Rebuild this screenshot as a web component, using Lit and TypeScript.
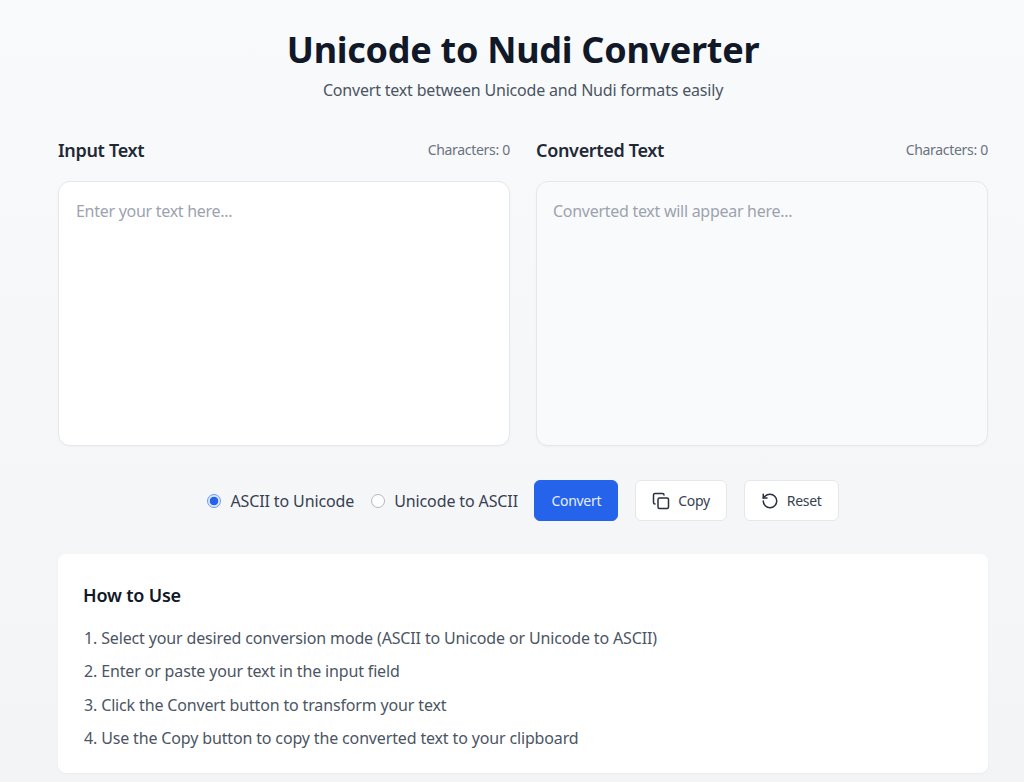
import { LitElement, html, css, svg } from "lit";
import { customElement } from "lit/decorators.js";

const steps = [
  "Select your desired conversion mode (ASCII to Unicode or Unicode to ASCII)",
  "Enter or paste your text in the input field",
  "Click the Convert button to transform your text",
  "Use the Copy button to copy the converted text to your clipboard",
];

@customElement("app-root")
export class AppRoot extends LitElement {
  static styles = css`
    :host {
      display: block;
      height: 782px;
      overflow: hidden;
      background: linear-gradient(to bottom, #f9fafb, #f3f4f6);
      font-family: "Noto Sans", "Liberation Sans", sans-serif;
      color: #111827;
    }
    .page {
      width: 930px;
      margin-left: 58px;
      padding-top: 28px;
      box-sizing: border-box;
    }
    header {
      text-align: center;
    }
    h1 {
      margin: 0;
      font-size: 36px;
      line-height: 44px;
      font-weight: 700;
      letter-spacing: -0.28px;
    }
    .sub {
      margin: 6px 0 0;
      font-size: 16px;
      line-height: 24px;
      color: #4b5563;
      letter-spacing: -0.19px;
    }
    .grid {
      display: grid;
      grid-template-columns: 452px 452px;
      column-gap: 26px;
      margin-top: 35px;
    }
    .head {
      display: flex;
      justify-content: space-between;
      align-items: center;
      height: 28px;
      margin-bottom: 16px;
    }
    h2 {
      margin: 0;
      font-size: 18px;
      line-height: 26px;
      height: 28px;
      font-weight: 600;
      color: #1f2937;
      letter-spacing: -0.32px;
    }
    .count {
      font-size: 14px;
      line-height: 20px;
      color: #6b7280;
      position: relative;
      top: -1px;
      letter-spacing: -0.3px;
    }
    textarea {
      display: block;
      width: 100%;
      height: 265px;
      box-sizing: border-box;
      padding: 17px;
      border: 1px solid #e5e7eb;
      border-radius: 12px;
      background: #fff;
      font: 16px/24px "Noto Sans", "Liberation Sans", sans-serif;
      letter-spacing: -0.28px;
      color: #111827;
      resize: none;
      outline: none;
      box-shadow: 0 1px 2px rgba(0, 0, 0, 0.03);
    }
    textarea.out {
      background: #f9fafb;
      padding-left: 16px;
    }
    textarea::placeholder {
      color: #9ca3af;
      opacity: 1;
    }
    .controls {
      display: flex;
      justify-content: center;
      align-items: center;
      gap: 16.5px;
      margin-top: 34px;
    }
    .radio {
      display: flex;
      align-items: center;
      gap: 9px;
      font-size: 16px;
      line-height: 24px;
      color: #374151;
      letter-spacing: -0.12px;
    }
    .radio input {
      appearance: none;
      box-sizing: border-box;
      width: 14px;
      height: 14px;
      margin: 0;
      border-radius: 50%;
      background: #fff;
      border: 1.5px solid #b4b7bd;
    }
    .radio input:checked {
      border-color: #6d9af3;
      background: radial-gradient(circle, #2563eb 0 4px, #dbe7fd 4.6px);
    }
    .radios {
      display: flex;
      gap: 17px;
    }
    button {
      display: inline-flex;
      align-items: center;
      justify-content: center;
      gap: 8px;
      height: 41px;
      box-sizing: border-box;
      border-radius: 6px;
      font: 400 14px/20px "Noto Sans", "Liberation Sans", sans-serif;
      letter-spacing: -0.3px;
      border: 1px solid #e5e7eb;
      background: #fff;
      color: #374151;
      padding: 0 16px;
    }
    button.primary {
      background: #2563eb;
      border-color: #2563eb;
      color: #e5edff;
      padding: 0 16px;
    }
    button.copy {
      padding: 0 16.5px;
    }
    button svg {
      width: 18px;
      height: 18px;
      fill: none;
      stroke: #27303f;
      stroke-width: 2;
      stroke-linecap: round;
      stroke-linejoin: round;
    }
    .card {
      margin-top: 33px;
      background: #fff;
      border-radius: 8px;
      padding: 27px 26px;
      height: 219px;
      box-sizing: border-box;
      box-shadow: 0 1px 2px rgba(0, 0, 0, 0.04);
    }
    h3 {
      margin: 0 0 17px -1px;
      font-size: 18px;
      line-height: 28px;
      font-weight: 600;
      color: #111827;
      letter-spacing: -0.2px;
    }
    ol {
      margin: 0;
      padding: 0;
      list-style: none;
      display: flex;
      flex-direction: column;
      gap: 7.8px;
    }
    li {
      font-size: 16px;
      line-height: 25.6px;
      color: #4b5563;
      letter-spacing: -0.15px;
    }
  `;

  render() {
    return html`
      <div class="page">
        <header>
          <h1>Unicode to Nudi Converter</h1>
          <p class="sub">Convert text between Unicode and Nudi formats easily</p>
        </header>
        <div class="grid">
          <section>
            <div class="head"><h2>Input Text</h2><span class="count">Characters: 0</span></div>
            <textarea placeholder="Enter your text here..."></textarea>
          </section>
          <section>
            <div class="head"><h2>Converted Text</h2><span class="count">Characters: 0</span></div>
            <textarea class="out" readonly placeholder="Converted text will appear here..."></textarea>
          </section>
        </div>
        <div class="controls">
          <div class="radios">
            <label class="radio"><input type="radio" name="mode" checked />ASCII to Unicode</label>
            <label class="radio"><input type="radio" name="mode" />Unicode to ASCII</label>
          </div>
          <button class="primary">Convert</button>
          <button class="copy">
            <svg viewBox="0 0 24 24">${svg`<rect x="8" y="8" width="14" height="14" rx="2" /><path d="M4 16c-1.1 0-2-.9-2-2V4c0-1.1.9-2 2-2h10c1.1 0 2 .9 2 2" />`}</svg>
            Copy
          </button>
          <button>
            <svg viewBox="0 0 24 24">${svg`<path d="M3 12a9 9 0 1 0 9-9 9.75 9.75 0 0 0-6.74 2.74L3 8" /><path d="M3 3v5h5" />`}</svg>
            Reset
          </button>
        </div>
        <div class="card">
          <h3>How to Use</h3>
          <ol>${steps.map((s, i) => html`<li>${i + 1}. ${s}</li>`)}</ol>
        </div>
      </div>
    `;
  }
}
